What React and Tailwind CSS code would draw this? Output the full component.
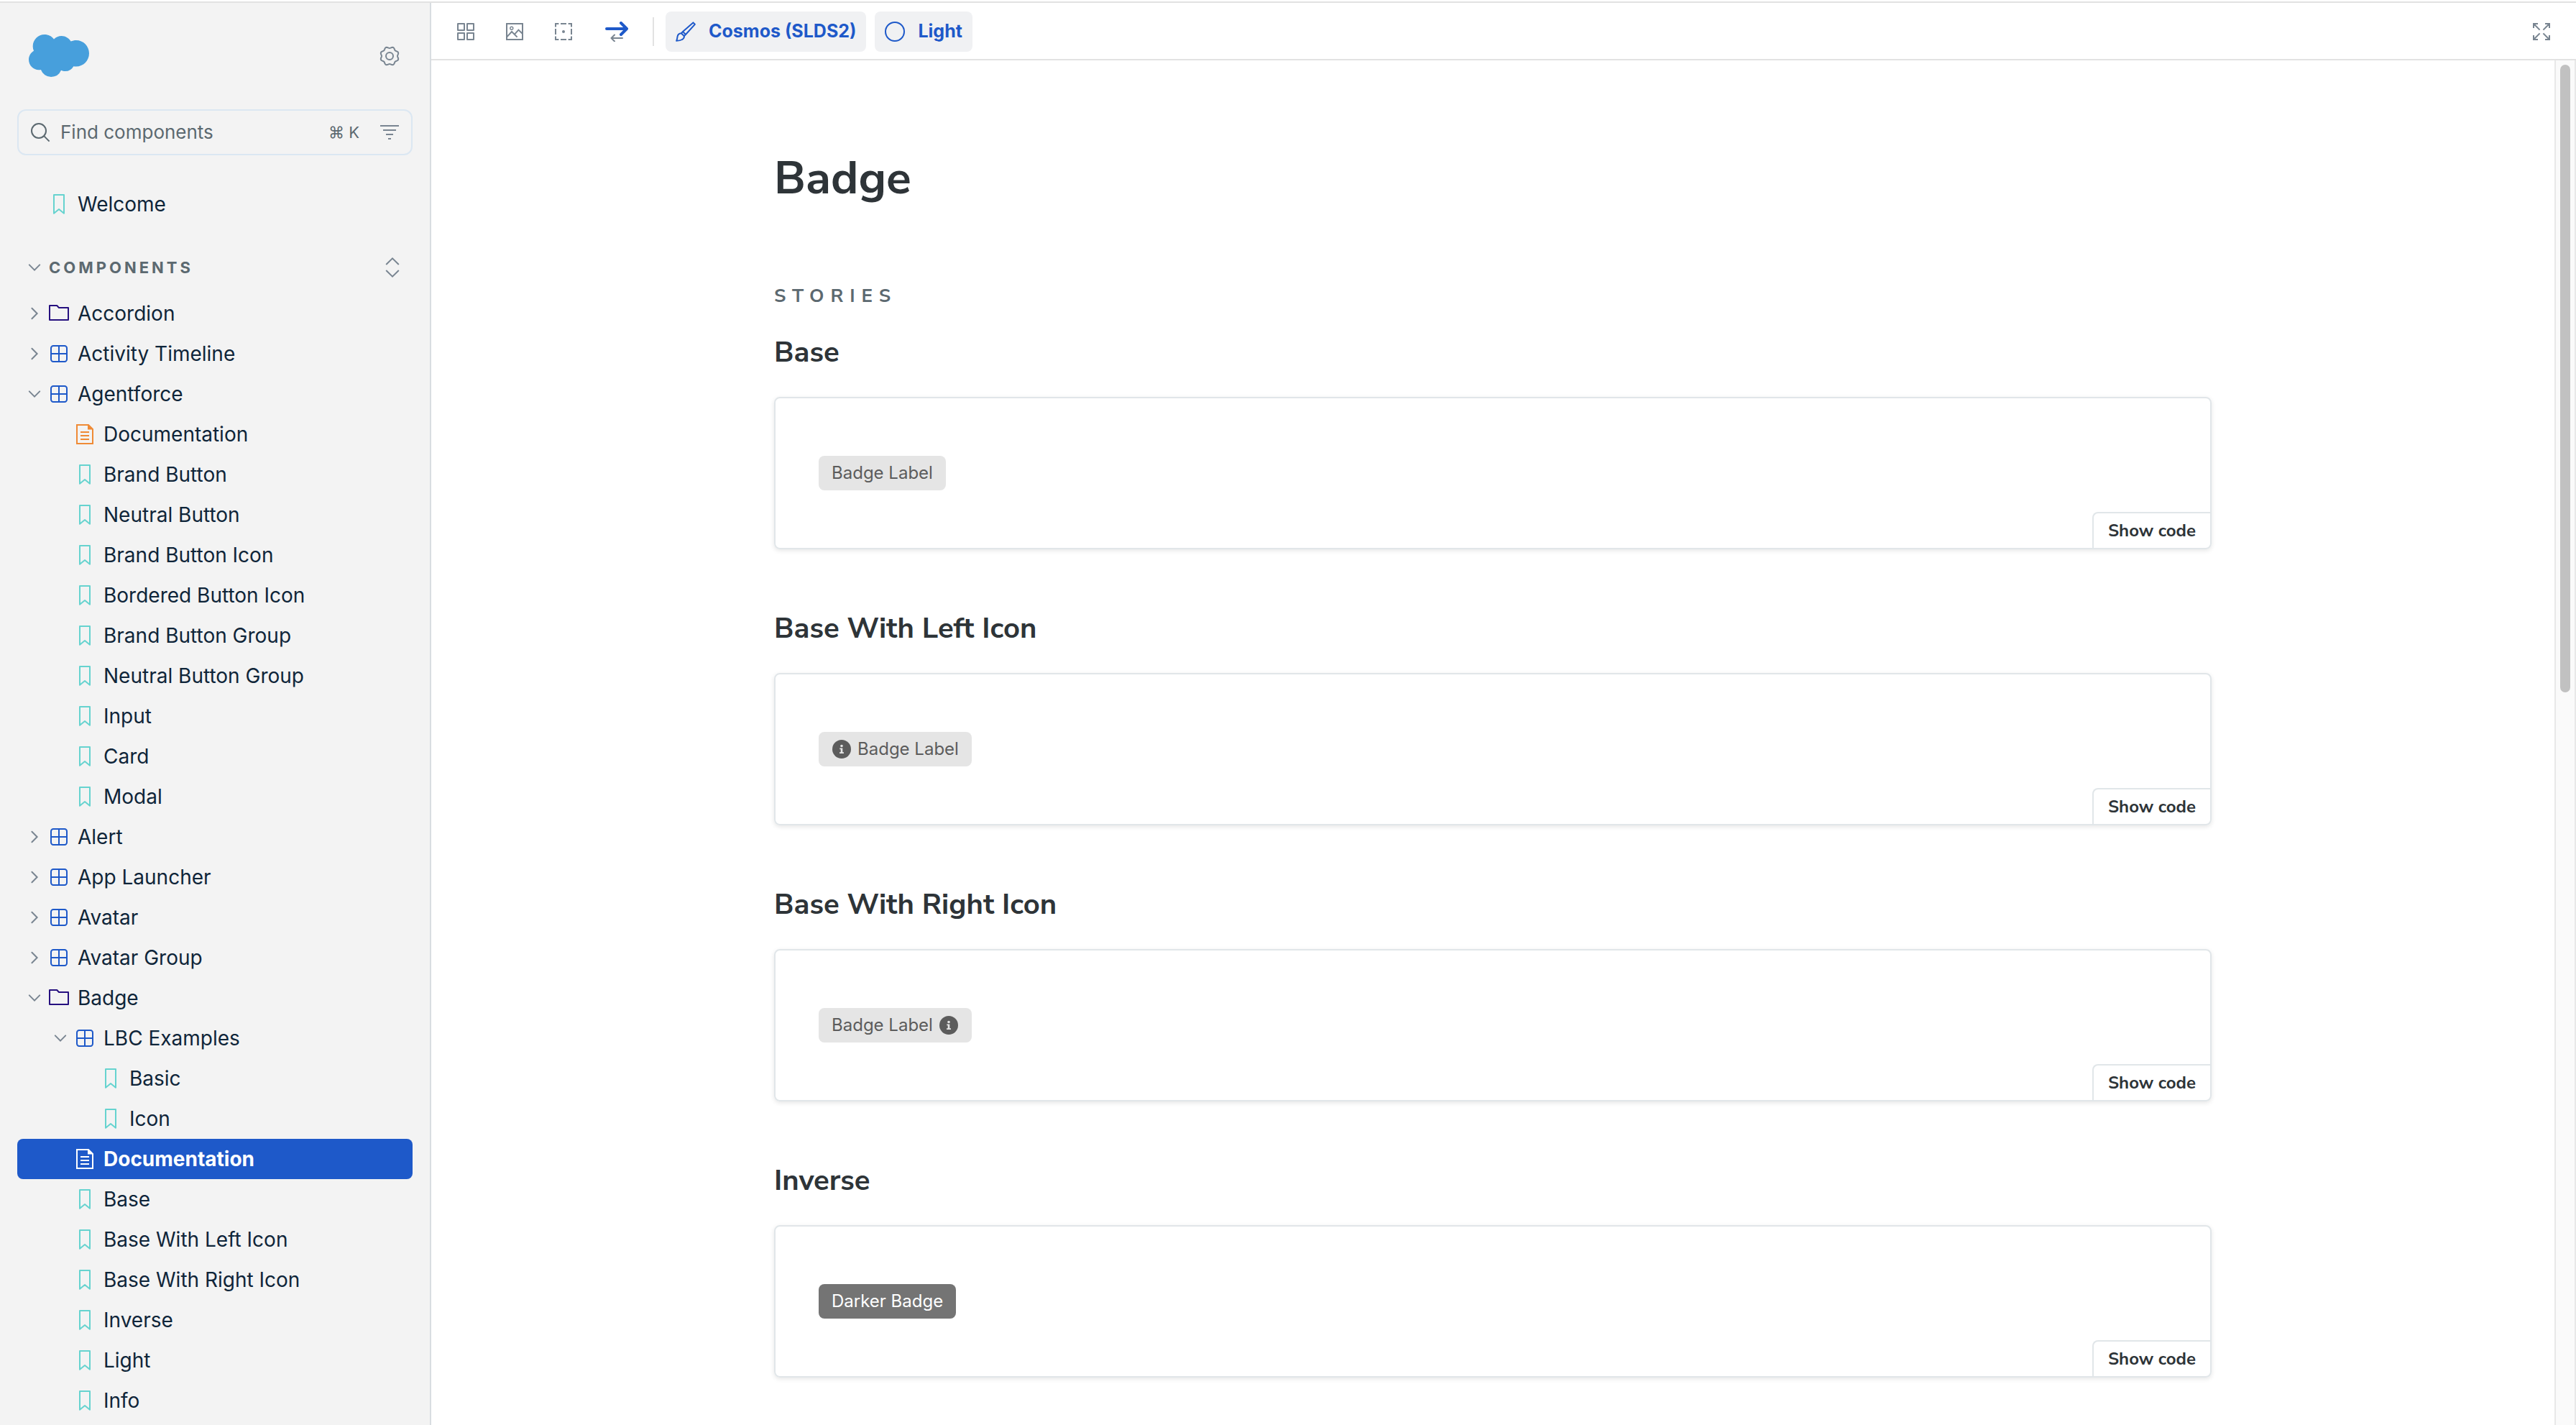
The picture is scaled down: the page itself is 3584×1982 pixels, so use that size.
import React from 'react';

const NAV = [
  { label: 'Accordion', type: 'folder', level: 0, open: false },
  { label: 'Activity Timeline', type: 'component', level: 0, open: false },
  { label: 'Agentforce', type: 'component', level: 0, open: true },
  { label: 'Documentation', type: 'docs', level: 1 },
  { label: 'Brand Button', type: 'story', level: 1 },
  { label: 'Neutral Button', type: 'story', level: 1 },
  { label: 'Brand Button Icon', type: 'story', level: 1 },
  { label: 'Bordered Button Icon', type: 'story', level: 1 },
  { label: 'Brand Button Group', type: 'story', level: 1 },
  { label: 'Neutral Button Group', type: 'story', level: 1 },
  { label: 'Input', type: 'story', level: 1 },
  { label: 'Card', type: 'story', level: 1 },
  { label: 'Modal', type: 'story', level: 1 },
  { label: 'Alert', type: 'component', level: 0, open: false },
  { label: 'App Launcher', type: 'component', level: 0, open: false },
  { label: 'Avatar', type: 'component', level: 0, open: false },
  { label: 'Avatar Group', type: 'component', level: 0, open: false },
  { label: 'Badge', type: 'folder', level: 0, open: true },
  { label: 'LBC Examples', type: 'component', level: 1, open: true },
  { label: 'Basic', type: 'story', level: 2 },
  { label: 'Icon', type: 'story', level: 2 },
  { label: 'Documentation', type: 'docs', level: 1, selected: true },
  { label: 'Base', type: 'story', level: 1 },
  { label: 'Base With Left Icon', type: 'story', level: 1 },
  { label: 'Base With Right Icon', type: 'story', level: 1 },
  { label: 'Inverse', type: 'story', level: 1 },
  { label: 'Light', type: 'story', level: 1 },
  { label: 'Info', type: 'story', level: 1 },
];

const STORIES = [
  { title: 'Base', label: 'Badge Label' },
  { title: 'Base With Left Icon', label: 'Badge Label', icon: 'left' },
  { title: 'Base With Right Icon', label: 'Badge Label', icon: 'right' },
  { title: 'Inverse', label: 'Darker Badge', inverse: true },
];

const INDENT = { 0: 'pl-[14px]', 1: 'pl-[50px]', 2: 'pl-[86px]' };

// Eight-lobed outline for the settings gear
const GEAR_POINTS = Array.from({ length: 96 }, (_, i) => {
  const angle = (i / 96) * Math.PI * 2;
  const r = 6 - 0.5 * Math.cos(angle * 8);
  return `${(7 + r * Math.cos(angle)).toFixed(2)},${(7 + r * Math.sin(angle)).toFixed(2)}`;
}).join(' ');

// All line icons share a 14 unit grid
function Icon({ children, className = '' }) {
  return (
    <svg viewBox="0 0 14 14" fill="none" stroke="currentColor" className={`size-7 shrink-0 ${className}`} aria-hidden="true">
      {children}
    </svg>
  );
}

function Cloud() {
  return (
    <svg viewBox="0 3.6 24 16.8" className="h-[59px] w-[84px]" fill="#479fdc" role="img" aria-label="Salesforce">
      <path d="M10.006 5.415a4.195 4.195 0 013.045-1.306c1.56 0 2.954.9 3.69 2.205.63-.3 1.35-.45 2.1-.45 2.85 0 5.159 2.34 5.159 5.22s-2.31 5.22-5.176 5.22c-.345 0-.69-.044-1.02-.104a3.75 3.75 0 01-3.3 1.95c-.6 0-1.155-.15-1.65-.375A4.314 4.314 0 018.88 20.4a4.302 4.302 0 01-4.05-2.82c-.27.062-.54.076-.825.076-2.204 0-4.005-1.8-4.005-4.05 0-1.5.811-2.805 2.01-3.51-.255-.57-.39-1.2-.39-1.846 0-2.58 2.1-4.65 4.65-4.65 1.53 0 2.85.705 3.72 1.8" />
    </svg>
  );
}

function GearIcon() {
  return (
    <Icon>
      <circle cx="7" cy="7" r="2.5" />
      <polygon points={GEAR_POINTS} />
    </Icon>
  );
}

function StoryTypeIcon({ type, selected }) {
  if (type === 'folder') {
    return (
      <Icon className="text-[#26107f]">
        <path d="M.5 11.5v-10h5.1L7 3h6.5v8.5z" strokeLinejoin="round" />
      </Icon>
    );
  }
  if (type === 'component') {
    return (
      <Icon className="text-[#1e59c9]">
        <rect x="1.5" y="1.5" width="11" height="11" rx="1.6" />
        <path d="M7 1.5v11M1.5 7h11" />
      </Icon>
    );
  }
  if (type === 'docs') {
    return (
      <Icon className={selected ? 'text-white' : 'text-[#ef8a35]'}>
        <path d="M1.5.5h8l3 3v10h-11z" />
        <path d="M9 .5v3.3h3.5z" fill="currentColor" stroke="none" />
        <path d="M4 5.5h6M4 8h6M4 10.5h6" />
      </Icon>
    );
  }
  return (
    <Icon className="text-[#66d3cf]">
      <path d="M3.5.5h7v12.9L7 10.5l-3.5 2.9z" strokeLinejoin="round" />
    </Icon>
  );
}

function Chevron({ open }) {
  return (
    <svg viewBox="0 0 10 10" className="size-5 shrink-0 text-[#798591]" fill="none" stroke="currentColor" strokeLinecap="round" aria-hidden="true">
      {open ? <path d="M1.4 3.2 5 6.8l3.6-3.6" /> : <path d="M3.2 1.4 6.8 5 3.2 8.6" />}
    </svg>
  );
}

function NavItem({ item }) {
  const { label, type, level, open, selected } = item;
  return (
    <li>
      <a
        href="#"
        aria-current={selected ? 'page' : undefined}
        className={`flex h-14 items-center gap-3 rounded-lg ${INDENT[level]} ${
          selected ? 'bg-[#1e59c9] font-bold text-white' : 'text-[#0f2539]'
        }`}
      >
        <span className="flex items-center gap-2.5">
          {open === undefined ? <span className="w-5" /> : <Chevron open={open} />}
          <StoryTypeIcon type={type} selected={selected} />
        </span>
        <span className="whitespace-nowrap">{label}</span>
      </a>
    </li>
  );
}

function Sidebar() {
  return (
    <aside className="flex w-[600px] shrink-0 flex-col overflow-hidden border-r-2 border-[#d8dde1] bg-[#f3f3f3] px-6 pt-11 text-[28px] leading-9">
      <div className="flex items-center justify-between pr-[18px] pl-4">
        <Cloud />
        <button type="button" aria-label="Settings" className="text-[#798591]">
          <GearIcon />
        </button>
      </div>

      <div className="mt-[45px] flex h-16 shrink-0 items-center rounded-xl border-2 border-[#dbe7f2] px-4 text-[#5c6970]">
        <Icon>
          <circle cx="6" cy="6" r="5" />
          <path d="m9.7 9.7 3.6 3.6" />
        </Icon>
        <input
          type="text"
          aria-label="Find components"
          placeholder="Find components"
          className="ml-3.5 w-0 flex-1 bg-transparent text-[26px] outline-none placeholder:text-[#5c6970]"
        />
        <kbd className="mr-7 font-[Inter,sans-serif] text-[22px]">⌘ K</kbd>
        <button type="button" aria-label="Tag filters" className="text-[#798591]">
          <Icon>
            <path d="M.5 2.5h13M2.5 5.5h9M4.5 8.5h5M6 11.5h2" />
          </Icon>
        </button>
      </div>

      <a href="#" className="mt-10 flex h-14 shrink-0 items-center gap-3 pl-11 text-[#0f2539]">
        <StoryTypeIcon type="story" />
        <span>Welcome</span>
      </a>

      <div className="mt-9 flex h-12 shrink-0 items-center justify-between px-[14px]">
        <button type="button" className="flex items-center gap-2.5 text-[22px] font-bold tracking-[4px] text-[#5c6970]">
          <Chevron open />
          COMPONENTS
        </button>
        <button type="button" aria-label="Expand all" className="text-[#798591]">
          <Icon>
            <path d="M2.6 5 7 .7 11.4 5M2.6 9 7 13.3 11.4 9" />
          </Icon>
        </button>
      </div>

      <ul className="mt-3">
        {NAV.map((item, i) => (
          <NavItem key={i} item={item} />
        ))}
      </ul>
    </aside>
  );
}

function Toolbar() {
  return (
    <header className="flex h-20 shrink-0 items-center border-b-2 border-[#e2e2e2] px-[34px] pt-0.5 text-[#798591]">
      <div className="flex items-center gap-10">
        <button type="button" aria-label="Apply a grid">
          <Icon>
            <path d="M1.5 1.5H6V6H1.5zM8 1.5h4.5V6H8zM1.5 8H6v4.5H1.5zM8 8h4.5v4.5H8z" strokeLinejoin="round" />
          </Icon>
        </button>
        <button type="button" aria-label="Change background">
          <Icon>
            <path d="M1.5 1.5h11v11h-11z" />
            <circle cx="4.9" cy="4.6" r="1" strokeWidth=".7" />
            <path d="M1.5 10.8 5 7l3.8 3.8M7 8.8l2.7-3 2.8 2.7" />
          </Icon>
        </button>
        <button type="button" aria-label="Apply outlines">
          <Icon>
            <path d="M1.5 3.7V1.5h2.2M5 1.5h4M10.3 1.5h2.2v2.2M12.5 5v4M12.5 10.3v2.2h-2.2M9 12.5H5M3.7 12.5H1.5v-2.2M1.5 9V5" />
            <circle cx="7" cy="7" r="1" fill="currentColor" stroke="none" />
          </Icon>
        </button>
        <button type="button" aria-label="Text direction">
          <svg viewBox="0 0 40 28" className="h-7 w-10" fill="none" strokeLinecap="round" strokeLinejoin="round" aria-hidden="true">
            <path d="M6 10h28M26 2l8 8-8 8" stroke="#1e59c9" strokeWidth="4" />
            <path d="M28 23H13M17 18.5 12.5 23l4.5 4.5" stroke="#798591" strokeWidth="2" />
          </svg>
        </button>
      </div>
      <div className="mr-4 ml-[30px] h-10 w-0.5 bg-[#e2e2e2]" />
      <div className="flex gap-3 text-[25px] font-bold text-[#1e59c9]">
        <button type="button" className="flex h-14 items-center gap-[18px] rounded-lg bg-[#f0f1f3] px-[14px]">
          <Icon>
            <path
              d="M12.2.7 13.4 1.9 7 9 5 7zM5 7 3.9 8.1 6 10.1 7 9M3.9 8.1Q1.7 8.3 1.3 10.3 1.1 12 .6 13.4 3.2 13.3 4.5 12.5 6 11.7 6 10.1"
              strokeLinejoin="round"
            />
          </Icon>
          Cosmos (SLDS2)
        </button>
        <button type="button" className="flex h-14 items-center gap-[18px] rounded-lg bg-[#f0f1f3] px-[14px]">
          <Icon>
            <circle cx="7" cy="7" r="6.5" />
          </Icon>
          Light
        </button>
      </div>
      <button type="button" aria-label="Go full screen" className="ml-auto">
        <Icon>
          <path d="M1.5 4.5v-3h3M1.5 1.5l4.3 4.3M9.5 1.5h3v3M12.5 1.5 8.2 5.8M1.5 9.5v3h3M1.5 12.5l4.3-4.3M9.5 12.5h3v-3M12.5 12.5 8.2 8.2" />
        </Icon>
      </button>
    </header>
  );
}

function InfoIcon() {
  return (
    <svg viewBox="0 0 28 28" className="size-7 shrink-0" aria-hidden="true">
      <circle cx="14" cy="14" r="13" fill="#5c5c5c" />
      <circle cx="14" cy="9.5" r="1.8" fill="#e5e5e5" />
      <path d="M11.3 12.5h4v5.800H17V20h-6v-1.700h1.700v-4.100h-1.400z" fill="#e5e5e5" />
    </svg>
  );
}

function Badge({ label, icon, inverse }) {
  return (
    <span
      className={`flex h-12 items-center gap-2 rounded-lg px-[18px] font-[Inter,sans-serif] text-2xl ${
        inverse ? 'bg-[#747474] text-white' : 'bg-[#e5e5e5] text-[#5c5c5c]'
      }`}
    >
      {icon === 'left' && <InfoIcon />}
      {label}
      {icon === 'right' && <InfoIcon />}
    </span>
  );
}

function Story({ story }) {
  return (
    <section className="mb-[86px]">
      <h3 className="text-[40px] leading-12 font-bold">{story.title}</h3>
      <div className="mt-[38px] flex h-[212px] flex-col rounded-lg border-2 border-[#e1e6e9] shadow-[0_2px_6px_rgba(0,0,0,0.1)]">
        <div className="flex px-[60px] pt-20">
          <Badge label={story.label} icon={story.icon} inverse={story.inverse} />
        </div>
        <button
          type="button"
          className="mt-auto h-[50px] self-end rounded-tl-lg border-t-2 border-l-2 border-[#e1e6e9] px-5 text-2xl font-bold"
        >
          Show code
        </button>
      </div>
    </section>
  );
}

function App() {
  return (
    <div className="mt-0.5 flex h-[calc(100vh-2px)] overflow-hidden border-t-2 border-[#e2e2e2] bg-white font-[Inter,sans-serif]">
      <Sidebar />
      <div className="flex min-w-0 flex-1 flex-col">
        <Toolbar />
        <div className="flex min-h-0 flex-1">
          <main className="min-w-0 flex-1 overflow-hidden px-10 pt-32 font-['Nunito_Sans','Open_Sans',sans-serif] text-[#2e3438]">
            <div className="mx-auto max-w-[2000px]">
              <h1 className="text-[64px] leading-18 font-bold">Badge</h1>
              <h2 className="mt-[110px] mb-9 text-[26px] leading-9 font-bold tracking-[9px] text-[#5c6970]">STORIES</h2>
              {STORIES.map((story) => (
                <Story key={story.title} story={story} />
              ))}
            </div>
          </main>
          {/* Scroll track */}
          <div className="w-[30px] shrink-0 border-x-2 border-[#e8e8e8] bg-[#fafafa] px-1.5 pt-1.5">
            <div className="h-6/13 rounded-full bg-[#c1c1c1]" />
          </div>
        </div>
      </div>
    </div>
  );
}

export default App;
